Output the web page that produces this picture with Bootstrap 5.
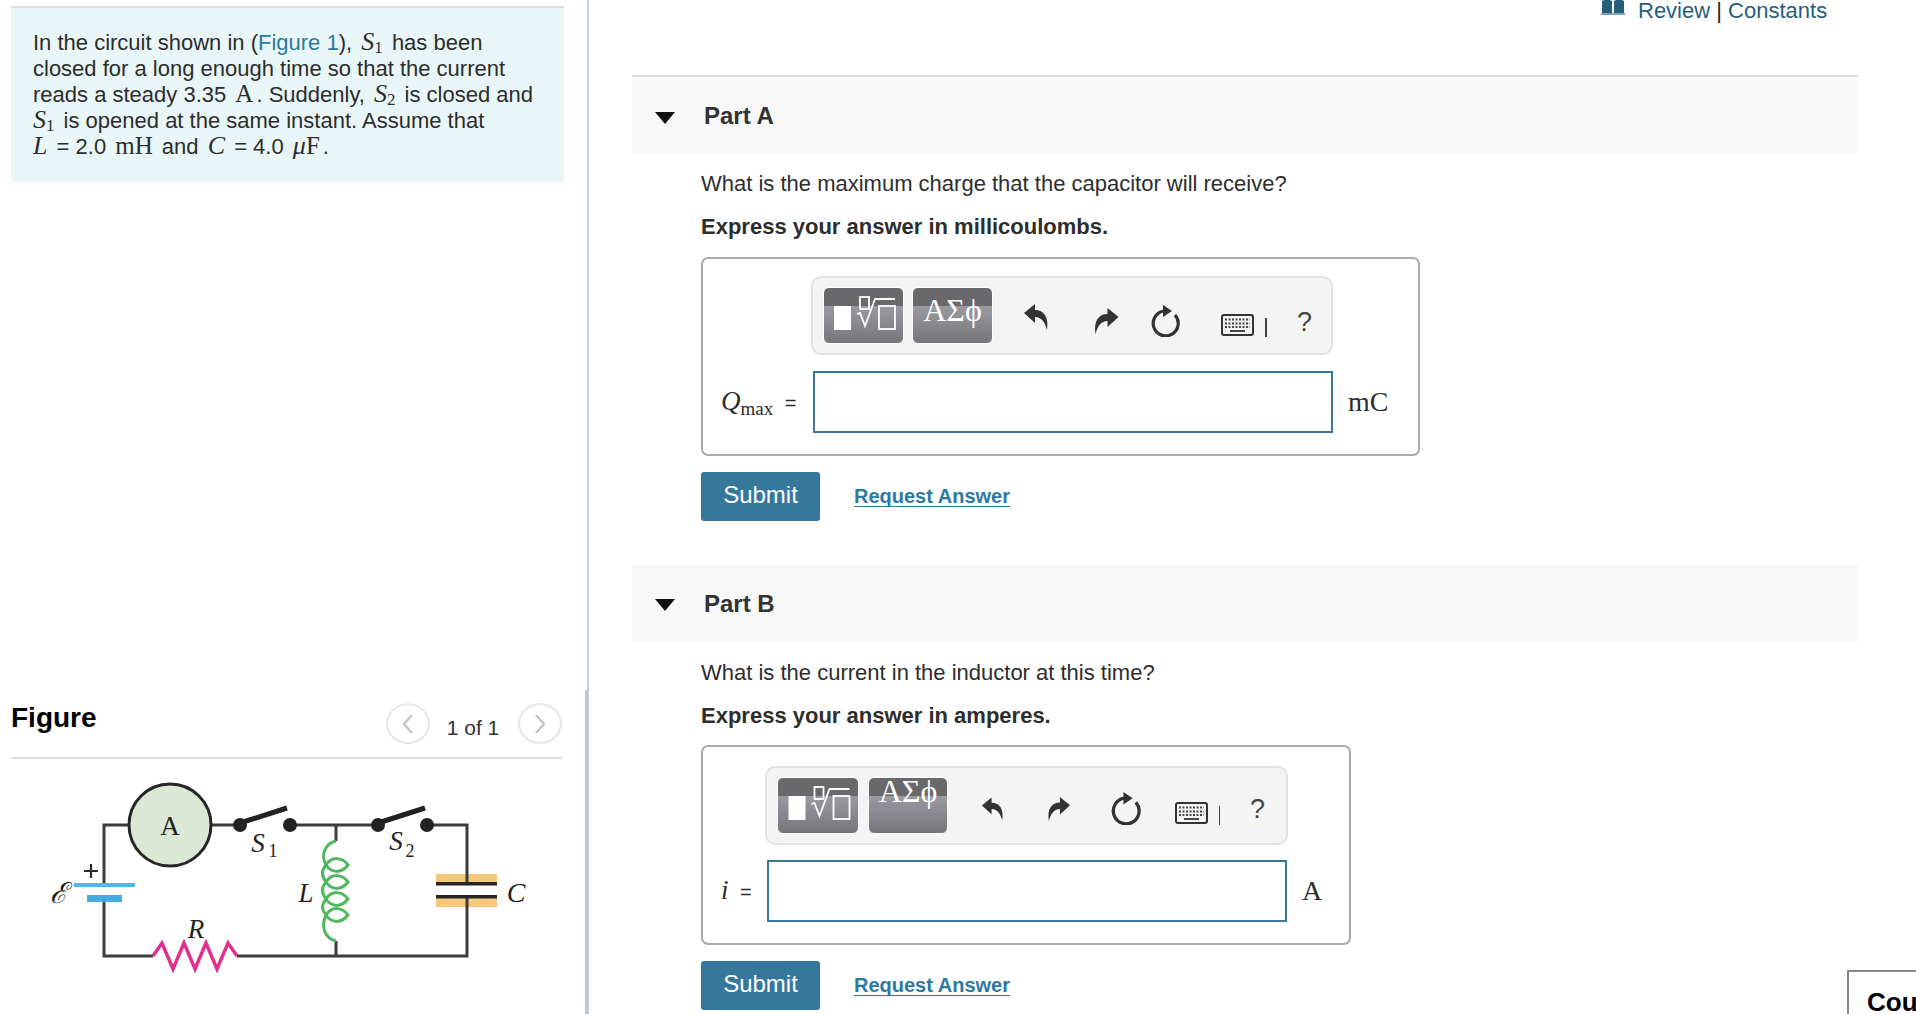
<!DOCTYPE html>
<html lang="en">
<head>
    <meta charset="UTF-8">
    <meta name="viewport" content="width=device-width, initial-scale=1.0">
    <title>Circuit problem</title>
    <link href="https://cdn.jsdelivr.net/npm/bootstrap@5.3.0/dist/css/bootstrap.min.css" rel="stylesheet">
    <style>
        html, body { height: 1014px; overflow: hidden; }
        body { font-family: "Liberation Sans", Arial, sans-serif; font-size: 22px; line-height: 26px; color: #2d2d2d; background: #fff; position: relative; }
        a { text-decoration: none; }
        .mth { font-family: "Liberation Serif", serif; font-size: 25px; line-height: 0; margin: 0 3px 0 0; }
        .mth i { font-size: 26px; }
        .mth sub { font-size: 17px; bottom: -.2em; font-style: normal; }
        .mth-wide { margin: 0 3px; }

        /* left column */
        .side { width: 589px; flex: none; }
        .side-top { height: 690px; padding-top: 6px; border-right: 2px solid #c3d0e2; }
        .side-low { height: 324px; border-right: 4px solid #bccadd; }
        .intro { margin-left: 11px; width: 553px; height: 176px; padding: 22px 0 0 22px; background: #e8f6f7; border-top: 2px solid #ddd; }
        .intro a { color: #2a7aa0; }
        .fig-head { margin-left: 11px; width: 551px; height: 69px; border-bottom: 2px solid #ddd; padding-top: 14px; }
        .fig-title { font-size: 28px; font-weight: 700; color: #000; line-height: 28px; }
        .pager { color: #333; font-size: 21px; margin-top: -1px; }
        .pager-btn { width: 44px; height: 41px; border: 2px solid #e6e6e6; border-radius: 50%; }
        .pager-txt { width: 88px; text-align: center; padding: 12px 2px 0 0; }
        .circuit { display: block; }
        .circuit text { font-family: "Liberation Serif", serif; fill: #222; }

        /* right column */
        .review-row { height: 75px; padding-left: 1012px; color: #222; line-height: 22px; }
        .review-row a { color: #24607a; }
        .book { margin-right: 13px; margin-top: -1px; }
        .part-head { margin-left: 43px; width: 1226px; height: 78px; background: #f8f8f8; border-top: 2px solid #ddd; padding: 2px 0 0 23px; font-size: 24px; font-weight: 700; color: #333; }
        .part-head svg { margin-top: 3px; }
        .part-head.plain { height: 77px; border-top: 0; margin-top: 44px; padding-top: 0; }
        .part-name { margin-left: 29px; }
        .prompt { margin: 18px 0 0 112px; color: #2d2d2d; }
        .prompt + .prompt { font-weight: 700; margin-top: 17px; }
        .plain + .prompt + .prompt { margin-top: 17px; }
        .ans-box { margin: 17px 0 0 112px; border: 2px solid #aaa; border-radius: 7px; }
        .ans-a { width: 719px; height: 199px; padding-top: 17px; }
        .ans-b { width: 650px; height: 200px; padding-top: 19px; margin-top: 16px; }
        .tools { height: 79px; width: 522px; background: #f4f4f4; border: 2px solid #e2e2e2; border-radius: 10px; padding: 9px 0 0 10px; }
        .ans-a .tools { margin-left: 108px; }
        .ans-b .tools { margin-left: 62px; width: 523px; }
        .tmpl { width: 81px; height: 57px; border-radius: 6px; border: 1px solid #fff; color: #fff; background: linear-gradient(#69696b 0, #69696b 32%, #9b9aa1 32%, #76757a 100%); font-family: "Liberation Serif", serif; font-size: 32px; line-height: 44px; text-align: center; flex: none; }
        .tmpl + .tmpl { margin-left: 8px; }
        .tools-b .tmpl { width: 82px; }
        .tools-b .tmpl + .tmpl { margin-left: 9px; width: 80px; line-height: 26px; }
        .tool-ic { flex: none; color: #333; fill: #333; }
        .sep { width: 2px; height: 19px; background: #444; flex: none; }
        .help { color: #444; font-size: 27px; flex: none; }
        .tools-a .t1 { margin: 16px 0 0 30px; }
        .tools-a .t2 { margin: 20px 0 0 44px; }
        .tools-a .t3 { margin: 17px 0 0 31px; }
        .tools-a .t4 { margin: 27px 0 0 40px; }
        .tools-a .sep { margin: 31px 0 0 11px; }
        .tools-a .help { margin: 22px 0 0 30px; }
        .tools-b .t1 { margin: 18px 0 0 33px; }
        .tools-b .t2 { margin: 18px 0 0 43px; }
        .tools-b .t3 { margin: 14px 0 0 40px; }
        .tools-b .t4 { margin: 25px 0 0 33px; }
        .tools-b .sep { margin: 29px 0 0 11px; width: 1px; }
        .tools-b .help { margin: 19px 0 0 30px; }
        .ans-row { margin-top: 16px; }
        .ans-b .ans-row { margin-top: 15px; }
        .ans-lbl { font-family: "Liberation Serif", serif; padding-left: 18px; flex: none; }
        .ans-a .ans-lbl { width: 110px; }
        .ans-b .ans-lbl { width: 64px; }
        .ans-lbl i { font-size: 27px; }
        .ans-lbl sub { font-size: 19px; }
        .ans-lbl span { font-family: "Liberation Sans", sans-serif; font-size: 20px; margin-left: 6px; }
        .ans-in { width: 520px; height: 62px; border: 2px solid #35789b; background: #fff; flex: none; border-radius: 0; }
        .ans-unit { font-family: "Liberation Serif", serif; font-size: 28px; margin-left: 15px; }
        .ans-btns { margin: 16px 0 0 112px; }
        .go-btn { width: 119px; height: 49px; background: #35789b; color: #fff; border: 0; border-radius: 3px; font-size: 24px; padding: 0 0 4px; }
        .req-link { margin-left: 34px; color: #2e7a9e; font-weight: 700; font-size: 20px; border-bottom: 1px solid #2e7a9e; line-height: 20px; margin-top: 0; }
        .course-tab { position: absolute; left: 1847px; top: 970px; width: 100px; height: 60px; border: 2px solid #888; background: #fff; padding: 17px 0 0 18px; font-size: 26px; font-weight: 700; color: #000; }
    </style>
</head>
<body>
    <div class="d-flex">
        <div class="side">
            <div class="side-top">
                <div class="intro">
                    In the circuit shown in (<a href="#">Figure 1</a>), <span class="mth mth-wide"><i>S</i><sub>1</sub></span> has been<br>
                    closed for a long enough time so that the current<br>
                    reads a steady 3.35 <span class="mth mth-wide">A</span>. Suddenly, <span class="mth mth-wide"><i>S</i><sub>2</sub></span> is closed and<br>
                    <span class="mth"><i>S</i><sub>1</sub></span> is opened at the same instant. Assume that<br>
                    <span class="mth"><i>L</i></span> = 2.0 <span class="mth mth-wide">mH</span> and <span class="mth mth-wide"><i>C</i></span> = 4.0 <span class="mth mth-wide"><i>μ</i>F</span>.
                </div>
            </div>
            <div class="side-low">
                <div class="fig-head d-flex justify-content-between">
                    <div class="fig-title">Figure</div>
                    <div class="pager d-flex">
                        <div class="pager-btn d-flex align-items-center justify-content-center">
                            <svg width="14" height="22" viewBox="0 0 14 22"><path d="M11 2 L3 11 L11 20" fill="none" stroke="#c4c4c4" stroke-width="2.4"/></svg>
                        </div>
                        <div class="pager-txt">1 of 1</div>
                        <div class="pager-btn d-flex align-items-center justify-content-center">
                            <svg width="14" height="22" viewBox="0 0 14 22"><path d="M3 2 L11 11 L3 20" fill="none" stroke="#c4c4c4" stroke-width="2.4"/></svg>
                        </div>
                    </div>
                </div>
                <svg class="circuit" width="585" height="253" viewBox="0 761 585 253">
                    <g fill="none" stroke="#3c3c3c" stroke-width="3">
                        <path d="M130 827 H104 V887 M104 900 V958 H153 M237 958 H467 V900 M467 885 V827 H427 M378 827 H290 M240 827 H210 M336 827 V843 M336 943 V958"/>
                    </g>
                    <circle cx="170" cy="827" r="41" fill="#dce8d6" stroke="#262626" stroke-width="3"/>
                    <text x="170" y="837" font-size="27" text-anchor="middle">A</text>
                    <circle cx="240" cy="827" r="7" fill="#222"/>
                    <circle cx="290" cy="827" r="7" fill="#222"/>
                    <circle cx="378" cy="827" r="7" fill="#222"/>
                    <circle cx="427" cy="827" r="7" fill="#222"/>
                    <path d="M240 825 L287 810 M378 825 L425 810" stroke="#222" stroke-width="5"/>
                    <rect x="74" y="885" width="61" height="4" fill="#55b4e6"/>
                    <rect x="87" y="897" width="35" height="7" fill="#45ace2"/>
                    <path d="M84 873 H98 M91 866 V880" stroke="#2a2a2a" stroke-width="2.200"/>
                    <text x="58" y="905" font-size="29" text-anchor="middle" font-style="italic">ℰ</text>
                    <path d="M153 958 L162 945 L173 971 L184 945 L195 971 L206 945 L217 971 L228 945 L237 958" fill="none" stroke="#e0308f" stroke-width="3.5"/>
                    <text x="196" y="940" font-size="27" font-style="italic" text-anchor="middle">R</text>
                    <path d="M336 843 C326 845 320 856 326 867 Q319 875 326 884 Q319 892 326 901 Q319 909 326 917 C320 930 326 941 336 943" fill="none" stroke="#4fb85e" stroke-width="3"/>
                    <path d="M326 867 C332 858 342 859 348 867 C342 875 332 876 326 867 Z M326 884 C332 875 342 876 348 884 C342 892 332 893 326 884 Z M326 901 C332 892 342 893 348 901 C342 909 332 910 326 901 Z M326 917 C332 908 342 909 348 917 C342 925 332 926 326 917 Z" fill="none" stroke="#4fb85e" stroke-width="3"/>
                    <rect x="436" y="876" width="61" height="11" fill="#f5c97c"/>
                    <rect x="436" y="899" width="61" height="10" fill="#f5c97c"/>
                    <path d="M467 876 V887 M467 899 V909" stroke="#3c3c3c" stroke-width="3"/>
                    <rect x="436" y="884" width="61" height="3.5" fill="#262626"/>
                    <rect x="436" y="897" width="61" height="3.5" fill="#262626"/>
                    <text x="258" y="854" font-size="27" font-style="italic" text-anchor="middle">S</text>
                    <text x="273" y="859" font-size="18" text-anchor="middle">1</text>
                    <text x="396" y="852" font-size="27" font-style="italic" text-anchor="middle">S</text>
                    <text x="410" y="859" font-size="18" text-anchor="middle">2</text>
                    <text x="306" y="904" font-size="27" font-style="italic" text-anchor="middle">L</text>
                    <text x="516" y="904" font-size="28" font-style="italic" text-anchor="middle">C</text>
                </svg>
            </div>
        </div>

        <div class="flex-grow-1">
            <div class="review-row d-flex align-items-start">
                <svg class="book" width="24" height="16" viewBox="0 0 24 16"><path d="M1 2 Q6 -1 11 2 V16 H1 Z M13 2 Q18 -1 23 2 V16 H13 Z" fill="#24607a"/><rect x="0" y="14" width="24" height="2" fill="#7ba3b5"/></svg>
                <span><a href="#">Review</a> | <a href="#">Constants</a></span>
            </div>

            <!-- Part A -->
            <div class="part-head d-flex align-items-center">
                <svg width="20" height="12" viewBox="0 0 20 12"><path d="M0 0 H20 L10 12 Z" fill="#111"/></svg>
                <span class="part-name">Part A</span>
            </div>
            <p class="prompt mb-0">What is the maximum charge that the capacitor will receive?</p>
            <p class="prompt mb-0">Express your answer in millicoulombs.</p>
            <div class="ans-box ans-a">
                <div class="tools tools-a d-flex align-items-start">
                    <div class="tmpl">
                        <svg width="81" height="57" viewBox="0 0 81 57"><rect x="10" y="18" width="17" height="24" fill="#fff"/><g fill="none" stroke="#fff" stroke-width="1.800"><rect x="36" y="9" width="9" height="12"/><path d="M33 26 L36 25 L41 38 L51 11 H71"/><rect x="55" y="18" width="16" height="23"/></g></svg>
                    </div>
                    <div class="tmpl">ΑΣϕ</div>
                    <svg class="tool-ic t1" width="26" height="28" viewBox="0 0 26 28"><path d="M1 10 L12 1 V7 C21 7 26 14 24 27 C22 19 18 14 12 14 V20 Z"/></svg>
                    <svg class="tool-ic t2" width="27" height="28" viewBox="0 0 26 28"><path d="M25 10 L14 1 V7 C5 7 0 14 2 27 C4 19 8 14 14 14 V20 Z"/></svg>
                    <svg class="tool-ic t3" width="30" height="33" viewBox="0 0 30 33"><path d="M24 11 A12.500 12.500 0 1 1 13 7" fill="none" stroke="#333" stroke-width="3.200"/><path d="M12 1 L21 7 L12 13 Z"/></svg>
                    <svg class="tool-ic t4" width="33" height="22" viewBox="0 0 33 22"><rect x="1" y="1" width="31" height="20" rx="2" fill="#f4f4f4" stroke="#333" stroke-width="2"/><path d="M4 5.500 H29 M4 9.500 H29 M4 13 H29" stroke="#444" stroke-width="2" stroke-dasharray="2 1.500"/><path d="M9 17 H24" stroke="#444" stroke-width="2"/></svg>
                    <div class="sep"></div>
                    <div class="help">?</div>
                </div>
                <div class="ans-row d-flex align-items-center">
                    <div class="ans-lbl"><i>Q</i><sub>max</sub> <span>=</span></div>
                    <input class="ans-in" type="text" aria-label="Q max">
                    <div class="ans-unit">mC</div>
                </div>
            </div>
            <div class="ans-btns d-flex align-items-center">
                <button class="go-btn" type="button">Submit</button>
                <a class="req-link" href="#">Request Answer</a>
            </div>

            <!-- Part B -->
            <div class="part-head plain d-flex align-items-center">
                <svg width="20" height="12" viewBox="0 0 20 12"><path d="M0 0 H20 L10 12 Z" fill="#111"/></svg>
                <span class="part-name">Part B</span>
            </div>
            <p class="prompt mb-0">What is the current in the inductor at this time?</p>
            <p class="prompt mb-0">Express your answer in amperes.</p>
            <div class="ans-box ans-b">
                <div class="tools tools-b d-flex align-items-start">
                    <div class="tmpl">
                        <svg width="82" height="57" viewBox="0 0 81 57"><rect x="10" y="18" width="17" height="24" fill="#fff"/><g fill="none" stroke="#fff" stroke-width="1.800"><rect x="36" y="9" width="9" height="12"/><path d="M33 26 L36 25 L41 38 L51 11 H71"/><rect x="55" y="18" width="16" height="23"/></g></svg>
                    </div>
                    <div class="tmpl">ΑΣϕ</div>
                    <svg class="tool-ic t1" width="23" height="28" viewBox="0 0 26 28"><path d="M1 10 L12 1 V7 C21 7 26 14 24 27 C22 19 18 14 12 14 V20 Z"/></svg>
                    <svg class="tool-ic t2" width="24" height="28" viewBox="0 0 26 28"><path d="M25 10 L14 1 V7 C5 7 0 14 2 27 C4 19 8 14 14 14 V20 Z"/></svg>
                    <svg class="tool-ic t3" width="31" height="34" viewBox="0 0 30 33"><path d="M24 11 A12.500 12.500 0 1 1 13 7" fill="none" stroke="#333" stroke-width="3.200"/><path d="M12 1 L21 7 L12 13 Z"/></svg>
                    <svg class="tool-ic t4" width="33" height="22" viewBox="0 0 33 22"><rect x="1" y="1" width="31" height="20" rx="2" fill="#f4f4f4" stroke="#333" stroke-width="2"/><path d="M4 5.500 H29 M4 9.500 H29 M4 13 H29" stroke="#444" stroke-width="2" stroke-dasharray="2 1.500"/><path d="M9 17 H24" stroke="#444" stroke-width="2"/></svg>
                    <div class="sep"></div>
                    <div class="help">?</div>
                </div>
                <div class="ans-row d-flex align-items-center">
                    <div class="ans-lbl"><i>i</i> <span>=</span></div>
                    <input class="ans-in" type="text" aria-label="i">
                    <div class="ans-unit">A</div>
                </div>
            </div>
            <div class="ans-btns d-flex align-items-center">
                <button class="go-btn" type="button">Submit</button>
                <a class="req-link" href="#">Request Answer</a>
            </div>
        </div>
    </div>
    <div class="course-tab">Cou</div>
</body>
</html>
